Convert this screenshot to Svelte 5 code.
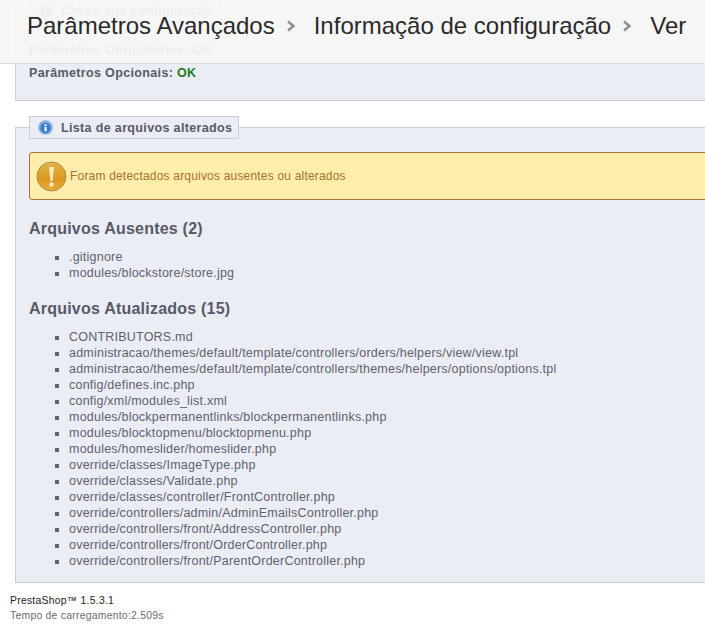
<script>
    const missing = ['.gitignore', 'modules/blockstore/store.jpg'];
    const updated = [
        'CONTRIBUTORS.md',
        'administracao/themes/default/template/controllers/orders/helpers/view/view.tpl',
        'administracao/themes/default/template/controllers/themes/helpers/options/options.tpl',
        'config/defines.inc.php',
        'config/xml/modules_list.xml',
        'modules/blockpermanentlinks/blockpermanentlinks.php',
        'modules/blocktopmenu/blocktopmenu.php',
        'modules/homeslider/homeslider.php',
        'override/classes/ImageType.php',
        'override/classes/Validate.php',
        'override/classes/controller/FrontController.php',
        'override/controllers/admin/AdminEmailsController.php',
        'override/controllers/front/AddressController.php',
        'override/controllers/front/OrderController.php',
        'override/controllers/front/ParentOrderController.php'
    ];
    const crumbs = ['Parâmetros Avançados', 'Informação de configuração', 'Ver'];
</script>

{#snippet infoIcon()}
    <svg class="info" viewBox="0 0 16 16" width="15" height="15">
        <circle cx="8" cy="8" r="7.5" fill="#7fa9dc" stroke="#a9c4e6" />
        <circle cx="8" cy="8.5" r="5.5" fill="#3f7cc4" />
        <rect x="7" y="7.5" width="2.2" height="4.5" fill="#fff" />
        <rect x="7" y="4.5" width="2.2" height="2" fill="#fff" />
    </svg>
{/snippet}

<div class="page">
    <header class="toolbar">
        {#each crumbs as crumb, i}
            {#if i > 0}
                <svg class="sep" viewBox="0 0 10 12" width="10" height="12">
                    <path d="M2 1.5 L7.5 6 L2 10.5" fill="none" stroke="#8c8c8c" stroke-width="2.4" />
                </svg>
            {/if}
            <span>{crumb}</span>
        {/each}
    </header>

    <div class="content">
        <fieldset class="first">
            <legend>{@render infoIcon()}Check sua configuração</legend>
            <p>Parâmetros Obrigatórios: <b>OK</b></p>
            <p>Parâmetros Opcionais: <b>OK</b></p>
        </fieldset>

        <fieldset class="second">
            <legend>{@render infoIcon()}Lista de arquivos alterados</legend>
            <div class="warn">
                <svg class="warn-icon" viewBox="0 0 31 31" width="31" height="31">
                    <defs>
                        <linearGradient id="amber" x1="0" y1="0" x2="0" y2="1">
                            <stop offset="0" stop-color="#e2b548" />
                            <stop offset="0.6" stop-color="#d9981f" />
                            <stop offset="1" stop-color="#e6b040" />
                        </linearGradient>
                    </defs>
                    <circle cx="15.5" cy="15.5" r="14.5" fill="url(#amber)" stroke="#a98a45" />
                    <path d="M13 6 H18 L16.6 20 H14.4 Z" fill="#f8e7b8" />
                    <circle cx="15.5" cy="23.5" r="2.3" fill="#f8e7b8" />
                </svg>
                <span>Foram detectados arquivos ausentes ou alterados</span>
            </div>

            <h3>Arquivos Ausentes (2)</h3>
            <ul>
                {#each missing as file}
                    <li>{file}</li>
                {/each}
            </ul>

            <h3>Arquivos Atualizados (15)</h3>
            <ul>
                {#each updated as file}
                    <li>{file}</li>
                {/each}
            </ul>
        </fieldset>

        <footer>
            <div class="brand">PrestaShop™ 1.5.3.1</div>
            <div>Tempo de carregamento:2.509s</div>
        </footer>
    </div>
</div>

<style>
    :global(body) {
        background: #fff;
        overflow: hidden;
    }

    .page {
        position: relative;
        width: 705px;
        height: 635px;
        overflow: hidden;
        font-family: "Liberation Sans", Arial, sans-serif;
        font-size: 12.5px;
        letter-spacing: 0.22px;
        color: #5f6170;
    }

    .toolbar {
        position: absolute;
        top: 0;
        left: 0;
        right: 0;
        height: 64px;
        box-sizing: border-box;
        padding: 0 0 11px 27px;
        display: flex;
        align-items: center;
        gap: 14px;
        background: rgba(247, 247, 247, 0.94);
        border-bottom: 1px solid #dcdcdc;
        font-size: 24px;
        letter-spacing: 0;
        color: #2a2a2a;
        white-space: nowrap;
    }

    .sep {
        margin-left: -3px;
        margin-right: 4px;
    }

    .content {
        padding: 0 0 0 10px;
        width: 760px;
    }

    fieldset {
        margin: 0 0 0 5px;
        padding: 0 13px;
        background: #ebedf4;
        border: 1px solid #ccced7;
        border-right: 0;
        min-width: 0;
    }

    legend {
        display: flex;
        align-items: center;
        gap: 8px;
        box-sizing: border-box;
        height: 23px;
        margin-left: 0;
        padding: 0 6px 0 8px;
        background: #ebedf4;
        border: 1px solid #ccced7;
        font-weight: bold;
        letter-spacing: 0.35px;
        color: #585a69;
    }

    .info {
        flex: none;
    }

    .first {
        margin-top: -1px;
        height: 102px;
        box-sizing: border-box;
    }

    .first legend {
        margin-top: -2px;
    }

    .first p {
        margin: 0;
        font-weight: bold;
        letter-spacing: 0.35px;
        line-height: 14px;
        padding-top: 21px;
        color: #585a69;
    }

    .first p + p {
        padding-top: 9px;
    }

    .first b {
        color: #1b7a22;
    }

    .second {
        margin-top: 15px;
        height: 467px;
        box-sizing: border-box;
    }

    .warn {
        display: flex;
        align-items: center;
        gap: 3px;
        box-sizing: border-box;
        height: 48px;
        margin-top: 13px;
        padding-left: 6px;
        background: #ffeeab;
        border: 1px solid #a5763b;
        border-radius: 3px;
        font-size: 12px;
        letter-spacing: 0.19px;
        color: #a8702f;
    }

    .warn-icon {
        flex: none;
    }

    h3 {
        margin: 19px 0 0;
        font-size: 16px;
        letter-spacing: 0.22px;
        line-height: 20px;
        color: #585a69;
    }

    ul {
        margin: 10px 0 0;
        padding: 0 0 0 40px;
        list-style: square;
    }

    ul + h3 {
        margin-top: 18px;
    }

    li {
        line-height: 16px;
    }

    footer {
        padding-top: 10px;
        font-size: 10.4px;
        letter-spacing: 0.25px;
        line-height: 15px;
        color: #6b6b6b;
    }

    .brand {
        color: #222;
    }
</style>
